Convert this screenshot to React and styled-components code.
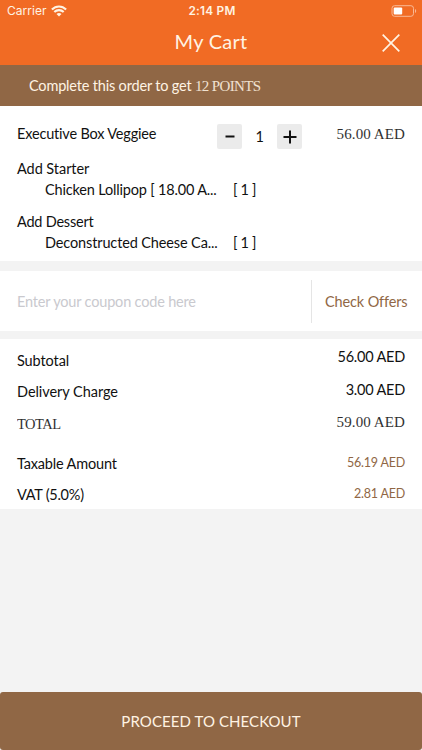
import React from 'react';
import styled, { createGlobalStyle } from 'styled-components';

const BROWN = '#906745';
const CREAM = '#fff3e3';

const GlobalStyle = createGlobalStyle`
  * { box-sizing: border-box; }
  body { margin: 0; background: #f3f3f3; font-family: Lato, sans-serif; color: #111; }
  button, input { font: inherit; border: 0; padding: 0; margin: 0; background: none; color: inherit; }
`;

const Screen = styled.main`
  width: 422px;
  height: 750px;
  display: flex;
  flex-direction: column;
  background: #f3f3f3;
  overflow: hidden;
`;

const Label = styled.span`
  font-size: ${(p) => p.$size || 14.5}px;
  letter-spacing: ${(p) => p.$track ?? -0.18}px;
  line-height: 20px;
  white-space: pre;
`;

const Display = styled(Label)`
  font-family: "Liberation Serif", serif;
  opacity: 0.88;
`;

const Header = styled.header`
  height: 65px;
  background: #f16b24;
  color: ${CREAM};
`;

const StatusBar = styled.div`
  height: 22px;
  display: grid;
  grid-template-columns: 1fr auto 1fr;
  align-items: center;
  padding: 0 5px 0 7px;
  font-family: Inter, sans-serif;
`;

const Carrier = styled.div`
  display: flex;
  align-items: center;
  gap: 4px;
`;

const Time = styled(Label)`
  font-weight: 600;
`;

const Battery = styled.svg`
  justify-self: end;
`;

const TitleBar = styled.div`
  height: 38px;
  display: grid;
  grid-template-columns: 62px 1fr 62px;
  align-items: center;
  text-align: center;
`;

const CloseButton = styled.button`
  display: flex;
  justify-content: center;
  padding-top: 4px;
`;

const PointsBanner = styled.div`
  height: 41px;
  padding: 0 29px;
  display: flex;
  align-items: center;
  background: ${BROWN};
  color: ${CREAM};
`;

const Section = styled.section`
  background: #fff;
  height: ${(p) => p.$height}px;
  margin-bottom: ${(p) => p.$gap || 0}px;
`;

const ItemRow = styled.div`
  height: 47px;
  padding: 18px 17px 0;
  display: grid;
  grid-template-columns: 200px 85px 1fr;
  align-items: start;
`;

const Stepper = styled.div`
  display: grid;
  grid-template-columns: 25px 1fr 25px;
  align-items: center;
  text-align: center;
`;

const StepButton = styled.button`
  height: 25px;
  border-radius: 2px;
  background: #ebebeb;
  display: flex;
  align-items: center;
  justify-content: center;
`;

const AddonGroup = styled.div`
  height: 53px;
  padding: 5px 17px 0;
`;

const Addon = styled.div`
  display: grid;
  grid-template-columns: 188px 40px;
  padding: 1px 0 0 28px;
`;

const CouponRow = styled(Section)`
  display: grid;
  grid-template-columns: 311px 1fr;
  align-items: center;
`;

const CouponInput = styled.input`
  width: 280px;
  margin-left: 17px;
  font-size: 14.5px;
  letter-spacing: -0.18px;
  outline: 0;
  &::placeholder { color: #c9c9ce; opacity: 1; }
`;

const OffersButton = styled.button`
  height: 43px;
  border-left: 1px solid #e5e5e5;
  text-align: left;
  padding-left: 13px;
  color: ${BROWN};
`;

const TotalRow = styled.div`
  display: flex;
  justify-content: space-between;
  align-items: flex-start;
  height: ${(p) => p.$height}px;
  padding: 0 17px;
`;

const Amount = styled.div`
  display: flex;
  justify-content: flex-end;
  margin-top: ${(p) => p.$shift || 0}px;
  color: ${(p) => (p.$muted ? BROWN : '#111')};
`;

const Totals = styled(Section)`
  padding-top: 12px;
`;

const CheckoutButton = styled.button`
  margin-top: auto;
  height: 58px;
  border-radius: 3px;
  background: ${BROWN};
  color: ${CREAM};
`;

const addons = [
  { group: 'Add Starter', groupTrack: -0.06, name: 'Chicken Lollipop [ 18.00 A...', track: -0.18, count: 1 },
  { group: 'Add Dessert', groupTrack: -0.22, name: 'Deconstructed Cheese Ca...', track: -0.13, count: 1 },
];

const totals = [
  { label: 'Subtotal', value: '56.00 AED', height: 31, shift: -4, track: -0.1 },
  { label: 'Delivery Charge', value: '3.00 AED', height: 32, shift: -2, track: -0.05 },
  { label: 'TOTAL', value: '59.00 AED', height: 40, shift: -2, track: -0.5, display: true },
  { label: 'Taxable Amount', value: '56.19 AED', height: 31, shift: -1, track: -0.17, muted: true },
  { label: 'VAT (5.0%)', value: '2.81 AED', height: 20, shift: -1, track: -0.25, muted: true },
];

function amountSize(t) {
  if (t.display) return { $size: 15, $track: 0.1 };
  return t.muted ? { $size: 12.5, $track: -0.2 } : { $size: 14.5, $track: -0.22 };
}

function WifiIcon() {
  return (
    <svg width="16" height="12" viewBox="0 0 16 12" fill="none" stroke="currentColor" strokeWidth="2.1">
      <path d="M.9 4.6C5 .5 11 .5 15.1 4.6M3.3 7.1C6 4.5 10 4.5 12.7 7.1" />
      <path d="M5.5 9C7 7.6 9 7.6 10.5 9L8 11.5Z" fill="currentColor" stroke="none" />
    </svg>
  );
}

export default function App() {
  return (
    <Screen>
      <GlobalStyle />
      <Header>
        <StatusBar>
          <Carrier>
            <Label $size={12} $track={0.05}>Carrier</Label>
            <WifiIcon />
          </Carrier>
          <Time $size={11.8} $track={0.25}>2:14 PM</Time>
          <Battery width="26" height="12" viewBox="0 0 26 12" fill="none">
            <rect x="1" y=".7" width="21.5" height="10.6" rx="2.6" stroke="#f9b995" />
            <rect x="2.7" y="2.4" width="8.5" height="7.2" rx="1" fill="#fff" />
            <path d="M24 4v4c1.6-.6 1.6-3.4 0-4Z" fill="#f9b995" />
          </Battery>
        </StatusBar>
        <TitleBar>
          <span />
          <Label $size={20} $track={0.25}>My Cart</Label>
          <CloseButton aria-label="Close">
            <svg width="18" height="18" viewBox="0 0 18 18" stroke="currentColor" strokeWidth="1.7">
              <path d="M.7.7l16.6 16.6M17.3.7L.7 17.3" />
            </svg>
          </CloseButton>
        </TitleBar>
      </Header>

      <PointsBanner>
        <Label>Complete this order to get </Label>
        <Display $size={15} $track={-0.65}>12 POINTS</Display>
      </PointsBanner>

      <Section $height={155} $gap={10}>
        <ItemRow>
          <Label>Executive Box Veggiee</Label>
          <Stepper>
            <StepButton aria-label="Decrease">
              <svg width="10" height="3"><path d="M.5 1.5h9" stroke="#111" strokeWidth="2" /></svg>
            </StepButton>
            <Label>1</Label>
            <StepButton aria-label="Increase">
              <svg width="14" height="14"><path d="M.5 7h13M7 .5v13" stroke="#111" strokeWidth="2" /></svg>
            </StepButton>
          </Stepper>
          <Amount>
            <Display $size={15} $track={0.1}>56.00 AED</Display>
          </Amount>
        </ItemRow>
        {addons.map((a) => (
          <AddonGroup key={a.group}>
            <Label $track={a.groupTrack}>{a.group}</Label>
            <Addon>
              <Label $track={a.track}>{a.name}</Label>
              <Label $track={-0.3}>[ {a.count} ]</Label>
            </Addon>
          </AddonGroup>
        ))}
      </Section>

      <CouponRow $height={60} $gap={8}>
        <CouponInput placeholder="Enter your coupon code here" />
        <OffersButton><Label $track={-0.13}>Check Offers</Label></OffersButton>
      </CouponRow>

      <Totals $height={170}>
        {totals.map((t) => {
          const Text = t.display ? Display : Label;
          return (
            <TotalRow key={t.label} $height={t.height}>
              <Text $track={t.track}>{t.label}</Text>
              <Amount $shift={t.shift} $muted={t.muted}>
                <Text {...amountSize(t)}>{t.value}</Text>
              </Amount>
            </TotalRow>
          );
        })}
      </Totals>

      <CheckoutButton><Label $size={15} $track={0.08}>PROCEED TO CHECKOUT</Label></CheckoutButton>
    </Screen>
  );
}
